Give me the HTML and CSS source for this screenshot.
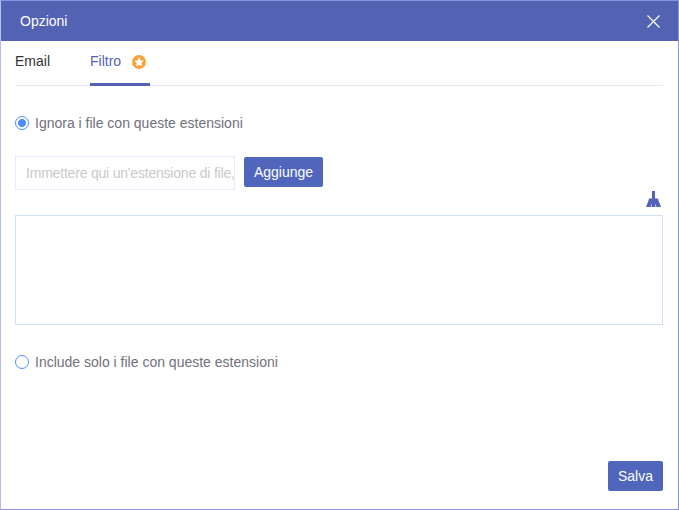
FILE: index.html
```html
<!DOCTYPE html>
<html lang="it">
<head>
<meta charset="utf-8">
<title>Opzioni</title>
<link rel="stylesheet" href="styles.css">
</head>
<body>
<div class="dialog">
  <header class="titlebar">
    <span class="title">Opzioni</span>
    <button class="close" aria-label="Chiudi">
      <svg width="13" height="13" viewBox="0 0 13 13"><path d="M.5.5l12 12M12.500.5l-12 12" stroke="#fff" stroke-width="1.200" fill="none"/></svg>
    </button>
  </header>
  <main class="content">
    <nav class="tabs">
      <span class="tab">Email</span>
      <span class="tab active">Filtro
        <svg class="badge" width="14" height="14" viewBox="0 0 14 14"><circle cx="7" cy="7" r="7" fill="#f9a23c"/><path d="M7 2.800l1.300 2.700 2.900.4-2.100 2 .5 2.900L7 9.400l-2.600 1.400.5-2.900-2.100-2 2.900-.4z" fill="#fff" stroke="#fff" stroke-width=".5" stroke-linejoin="round"/></svg>
      </span>
    </nav>
    <label class="option first"><span class="radio checked"></span>Ignora i file con queste estensioni</label>
    <div class="add-row">
      <input class="ext-input" type="text" placeholder="Immettere qui un'estensione di file, ad esempio">
      <button class="btn add">Aggiunge</button>
    </div>
    <div class="tools">
      <svg width="15" height="16" viewBox="0 0 15 16"><path d="M6 0h3v7.500h3l.5 2 2.500 6.500H0l2.500-6.500.5-2h3z" fill="#5263bb"/><path d="M5 16l.6-2.500M10 16l-.6-2.500" stroke="#fff" stroke-width=".7" fill="none"/></svg>
    </div>
    <div class="ext-list"></div>
    <label class="option second"><span class="radio"></span>Include solo i file con queste estensioni</label>
    <div class="footer"><button class="btn save">Salva</button></div>
  </main>
</div>
</body>
</html>
```
FILE: styles.css
```css
* { box-sizing: border-box; }
html, body { margin: 0; height: 100%; }
body { font-family: "Liberation Sans", Arial, sans-serif; font-size: 14px; background: #fff; }
.dialog {
  width: 679px; height: 510px;
  border: 1px solid #8a93e0;
  border-left-color: #b9bee8;
  display: flex; flex-direction: column;
}
.titlebar {
  height: 40px; flex: none;
  background: #5362b3;
  color: #fff;
  display: flex; align-items: center; justify-content: space-between;
  padding: 0 18px 0 19px;
}
.close { border: 0; background: none; padding: 0; display: flex; }
.content { flex: 1; display: flex; flex-direction: column; padding: 0 15px 0 14px; }
.tabs { display: flex; gap: 40px; height: 45px; border-bottom: 1px solid #e6e6ee; flex: none; }
.tab { color: #333; height: 45px; padding-top: 12px; line-height: 16px; }
.tab.active { color: #5563bb; width: 60px; border-bottom: 3px solid #5362b3; display: block; white-space: nowrap; }
.badge { vertical-align: -3px; margin-left: 7px; }
.option { display: flex; align-items: center; gap: 6px; color: #71717a; line-height: 16px; height: 16px; }
.first { margin-top: 29px; }
.second { margin-top: 29px; }
.radio { width: 14px; height: 14px; border: 1.5px solid #4d8dff; border-radius: 50%; background: #fff; flex: none; }
.radio.checked { background: radial-gradient(circle, #4d8dff 0 3.700px, #fff 4.300px); }
.add-row { display: flex; align-items: flex-start; gap: 9px; margin-top: 25px; height: 34px; }
.ext-input {
  width: 220px; height: 34px;
  border: 1px solid #e2ebf7;
  padding: 0 0 0 10px;
  font: 14px "Liberation Sans", Arial, sans-serif;
  outline: 0;
}
.ext-input::placeholder { color: #c9c9c9; opacity: 1; letter-spacing: -.2px; }
.btn {
  border: 0; border-radius: 2px;
  background: #5066bd; color: #fff;
  font: 14px "Liberation Sans", Arial, sans-serif;
  height: 30px; padding: 0;
}
.add { width: 79px; margin-top: 1px; }
.tools { display: flex; justify-content: flex-end; height: 25px; padding-top: 1px; padding-right: 2px; }
.ext-list { height: 110px; border: 1px solid #cfe0f5; flex: none; }
.footer { margin-top: auto; display: flex; justify-content: flex-end; padding-bottom: 18px; }
.save { width: 55px; }
```
